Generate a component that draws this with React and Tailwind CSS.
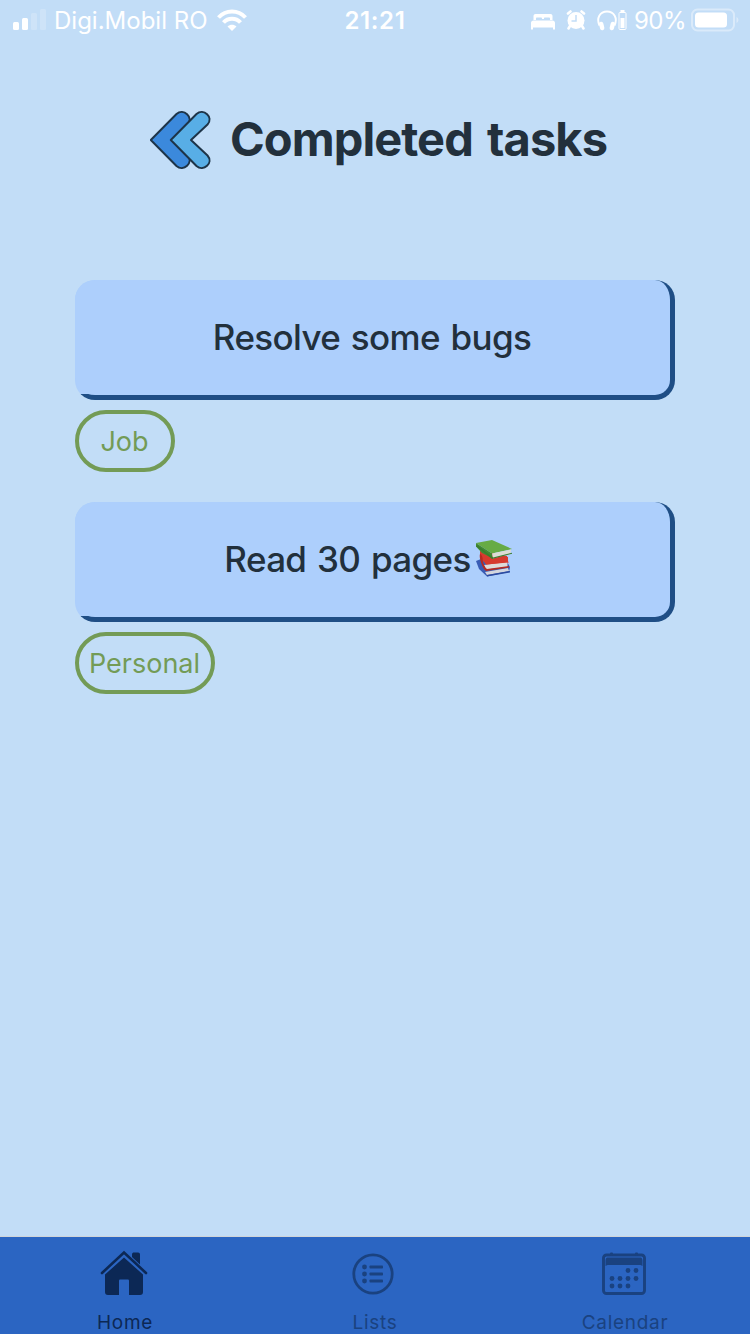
const BooksIcon = () => (
  <svg viewBox="0 0 40 40" className="-mt-1 mr-[6px] ml-[3px] h-10 w-10 shrink-0">
    <path d="M2 23L7 21L32 22L36 29L35 34L13 38.500L5 31Z" fill="#3a5db5" />
    <path d="M11 34L34 30L35 33L13 37Z" fill="#d3d6de" />
    <path d="M13 38.500L36 34.500L36 33L13 37Z" fill="#2b4ba0" />
    <path d="M6 13L33 18L34.500 25L13 27L6 20Z" fill="#d9392f" />
    <path d="M10 27L33.500 24L33.500 29L12 31.500Z" fill="#dedbd9" />
    <path d="M6 16C5 19 7 26 10 31L12 33L35 29.500L35 28L13 31C9 28 8 21 9 17Z" fill="#b52a22" />
    <path d="M7 16L12 26.500L34 24.500L34 19Z" fill="#d63a2e" />
    <path d="M2 5L18 2L38 11L18 15.500Z" fill="#67ab45" />
    <path d="M2 5L18 15.500L19 20.500L8 15L2 8.500Z" fill="#418a32" />
    <path d="M18 15.500L37 11.500L36.500 15.500L19 20.500Z" fill="#dcdcd4" />
    <path d="M2 8L18 21L38 15.800L38 14.800L19 19.500L3 7Z" fill="#3a7d2e" />
  </svg>
);

const BackIcon = () => (
  <svg viewBox="0 0 62 60" className="h-[60px] w-[62px] shrink-0" stroke="#1d3448" strokeWidth="2" strokeLinejoin="round">
    <path d="M0.800 30L26.500 4C33.500 -2 44 7 37.500 14.500L22 30L37.500 45.500C44 53 33.500 62 26.500 56Z" fill="#3b89dc" />
    <path d="M20.800 30L46.500 4C53.500 -2 64 7 57.500 14.500L41 30L57.500 45.500C64 53 53.500 62 46.500 56Z" fill="#58aee6" />
  </svg>
);

const HomeIcon = () => (
  <svg viewBox="0 0 48 46" className="mr-[2px] mb-px h-[46px] w-12">
    <path d="M2 23L24 2.500L46 23" fill="none" stroke="#0c2855" strokeWidth="2.600" strokeLinecap="round" />
    <path d="M32 7V4.500C32 3 33 2.500 34 2.500H38C39.500 2.500 40 3.500 40 4.500V14.500Z" fill="#0c2855" />
    <path d="M24 7.500L43 24.500V42C43 44 42 45 40 45H29V31C29 29.800 28.500 29.500 27.500 29.500H20.500C19.500 29.500 19 29.800 19 31V45H8C6 45 5 44 5 42V24.500Z" fill="#0c2855" />
  </svg>
);

const ListIcon = () => (
  <svg viewBox="0 0 42 42" className="mr-[5px] h-[42px] w-[42px]" fill="#1a4280">
    <circle cx="21" cy="21" r="19.200" fill="none" stroke="#1a4280" strokeWidth="2.800" />
    {[14, 21, 28].map((y) => (
      <g key={y}>
        <circle cx="12.500" cy={y} r="2.400" />
        <rect x="17.500" y={y - 1.600} width="13.500" height="3.200" rx="0.800" />
      </g>
    ))}
  </svg>
);

const CALENDAR_DOTS = [[26, 18.5], [34, 18.5], [10, 26.5], [18, 26.5], [26, 26.5], [34, 26.5], [10, 34], [18, 34], [26, 34]];

const CalendarIcon = () => (
  <svg viewBox="0 0 44 44" className="mr-[2px] mt-px h-11 w-11" fill="#1a4280">
    <rect x="1.500" y="3" width="41" height="38.500" rx="3" fill="none" stroke="#1a4280" strokeWidth="2.900" />
    <path d="M3.500 14V9C3.500 7 4 6 5 5.500H39C40 6 40.500 7 40.500 9V14L38.500 13H5.500Z" />
    <rect x="8" y="0.500" width="3" height="3" rx="1" />
    <rect x="33" y="0.500" width="3" height="3" rx="1" />
    {CALENDAR_DOTS.map(([x, y]) => (
      <circle key={`${x}-${y}`} cx={x} cy={y} r="2.400" />
    ))}
  </svg>
);

const StatusBar = () => (
  <header className="grid h-10 grid-cols-[1fr_auto_1fr] items-center pl-[13px] pr-[11px] text-[24px] leading-[38px] text-white">
    <div className="flex items-center">
      <svg viewBox="0 0 34 22" className="h-[22px] w-[34px]" fill="white">
        <rect x="0" y="13" width="6" height="8" rx="1.500" />
        <rect x="9" y="9" width="6" height="12" rx="1.500" />
        <rect x="18" y="4" width="6" height="17" rx="1.500" opacity="0.2" />
        <rect x="27" y="0" width="6" height="21" rx="1.500" opacity="0.2" />
      </svg>
      <span className="ml-[7px] w-[155px] pt-[2px] whitespace-nowrap">Digi.Mobil RO</span>
      <svg viewBox="0 0 30 22" className="ml-2 h-[22px] w-[30px]" fill="none" stroke="white" strokeWidth="4">
        <path d="M1.500 8.500C9 0.500 21 0.500 28.500 8.500" />
        <path d="M6.500 13.500C11 8.500 19 8.500 23.500 13.500" />
        <path d="M10.500 17.500C13 15 17 15 19.500 17.500L15 22Z" fill="white" stroke="none" />
      </svg>
    </div>
    <span className="mr-[2px] pt-[2px] text-center font-semibold tracking-[0.6px]">21:21</span>
    <div className="flex items-center justify-end">
      <svg viewBox="0 0 24 16" className="mt-[3px] mr-[11px] h-4 w-6" fill="white">
        <path d="M2.500 6V2C2.500 .8 3.300 0 4.500 0H19.500C20.700 0 21.500 .8 21.500 2V6H19V4.500C19 3.800 18.500 3.500 18 3.500H14C13.300 3.500 13 4 13 4.500V5H11V4.500C11 4 10.500 3.500 10 3.500H6C5.300 3.500 5 4 5 4.500V6Z" />
        <path d="M0 15.500V9C0 7.500 1 6.500 2.500 6.500H21.500C23 6.500 24 7.500 24 9V15.500H22V13.500H2V15.500Z" />
      </svg>
      <svg viewBox="0 0 20 20" className="mr-[11px] h-5 w-5" fill="white">
        <circle cx="10" cy="10.500" r="8.500" />
        <path d="M4 16L2.500 18.500M16 16L17.500 18.500M2 3.500L4.500 1.500M18 3.500L15.500 1.500" stroke="white" strokeWidth="2.600" strokeLinecap="round" />
        <path d="M10 5V11H5.500" fill="none" stroke="#c2ddf7" strokeWidth="1.500" />
      </svg>
      <svg viewBox="0 0 30 21" className="mt-px mr-[7px] h-[21px] w-[30px]" fill="none" stroke="white">
        <path d="M2.500 15.500C-1 8 3 1.500 10 1.500C17 1.500 21 8 17.500 15.500" strokeWidth="1.900" />
        <path d="M4.200 14L5.200 18M15.800 14L14.800 18" strokeWidth="4.400" strokeLinecap="round" />
        <rect x="22" y="2.500" width="7" height="17" rx="1" />
        <path d="M23.500 0H27.500V2H23.500ZM23.500 8H27.500V18H23.500Z" fill="white" stroke="none" />
      </svg>
      <span className="pt-[2px] tracking-[-0.5px]">90%</span>
      <svg viewBox="0 0 48 24" className="ml-[5px] h-6 w-12">
        <rect x="1" y="1.500" width="42" height="21" rx="5.500" fill="none" stroke="white" strokeOpacity="0.4" strokeWidth="2" />
        <rect x="4" y="4.500" width="32" height="15" rx="3.500" fill="white" />
        <path d="M45.500 9C48 10 48 14 45.500 15Z" fill="white" opacity="0.4" />
      </svg>
    </div>
  </header>
);

const Task = ({ title, icon, tag, tagClass }) => (
  <section className="flex flex-col items-start gap-2.5">
    <div className="h-[120px] w-full rounded-[20px] bg-[#1f4e85] bg-[linear-gradient(#adcffc,#adcffc)] bg-[length:580px_114px] bg-no-repeat pr-[5px] pb-[5px] text-[35px] font-medium text-[#22303c]">
      <div className="flex h-full items-center justify-center rounded-tl-[20px] rounded-tr-[15px_20px] rounded-br-[15px] rounded-bl-[20px_17px] bg-[#adcffc] pr-px">
        <span className="whitespace-nowrap tracking-[-0.65px] [word-spacing:2px]">{title}</span>
        {icon}
      </div>
    </div>
    <div className={`flex h-[62px] items-center justify-center rounded-full border-4 border-[#739b56] pr-px pt-[3px] text-[27px] text-[#739b56] ${tagClass}`}>
      {tag}
    </div>
  </section>
);

const Tab = ({ icon, label, className }) => (
  <div className={`flex flex-1 flex-col items-center text-[19px] leading-[26px] tracking-[0.7px] ${className}`}>
    <div className="flex h-[73px] shrink-0 items-center">{icon}</div>
    <span>{label}</span>
  </div>
);

export default function App() {
  return (
    <div className="flex h-[1334px] w-[750px] flex-col overflow-hidden bg-[#c2ddf7] font-['Inter',sans-serif]">
      <StatusBar />
      <div className="mt-[70px] flex h-[60px] items-center pl-[150px]">
        <BackIcon />
        <h1 className="ml-[18px] pb-[2px] whitespace-nowrap text-[47px] font-bold leading-[58px] tracking-[-0.93px] text-[#22303c] [word-spacing:4px]">Completed tasks</h1>
      </div>
      <main className="mt-[110px] flex flex-1 flex-col gap-[30px] px-[75px]">
        <Task title="Resolve some bugs" tag="Job" tagClass="w-[100px]" />
        <Task title="Read 30 pages" icon={<BooksIcon />} tag="Personal" tagClass="w-[140px]" />
      </main>
      <nav className="flex h-[98px] shrink-0 border-t border-[#d0d4d8] bg-[#2b65c2]">
        <Tab icon={<HomeIcon />} label="Home" className="text-[#0c2855]" />
        <Tab icon={<ListIcon />} label="Lists" className="text-[#1a4280]" />
        <Tab icon={<CalendarIcon />} label="Calendar" className="text-[#1a4280]" />
      </nav>
    </div>
  );
}
